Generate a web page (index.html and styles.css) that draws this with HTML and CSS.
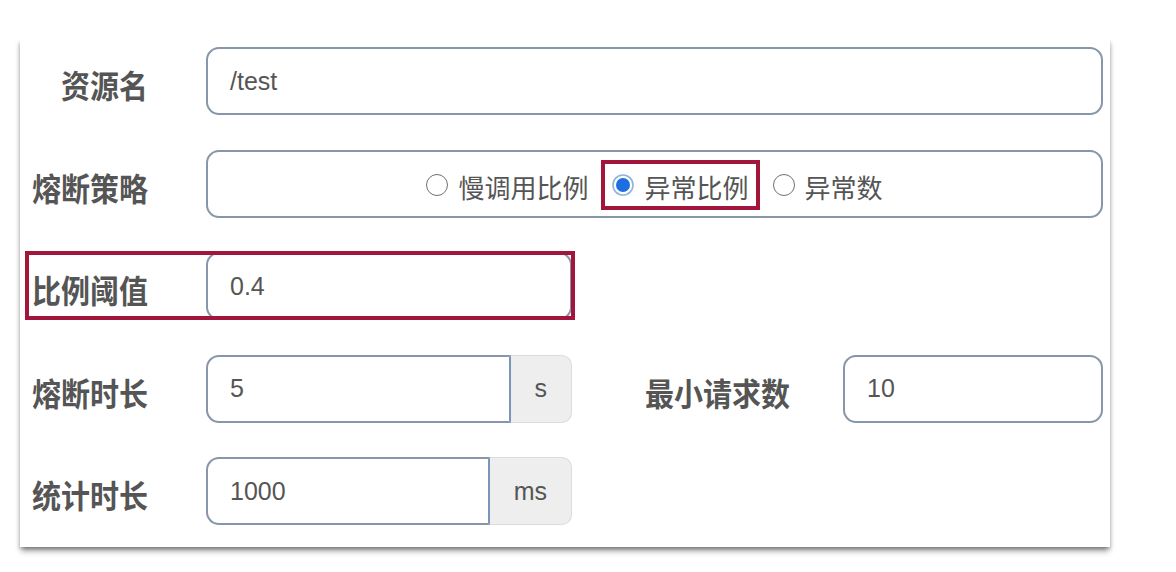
FILE: index.html
```html
<!DOCTYPE html>
<html lang="zh-CN">
<head>
<meta charset="utf-8">
<title>熔断规则</title>
<link rel="stylesheet" href="styles.css">
</head>
<body>
<div class="panel">
  <form class="form">
    <div class="row">
      <label class="lbl">资源名</label>
      <div class="field wide"><span class="val">/test</span></div>
    </div>
    <div class="row">
      <label class="lbl">熔断策略</label>
      <div class="field wide radios">
        <span class="opt"><span class="radio"></span><span class="opt-t">慢调用比例</span></span>
        <span class="opt sel"><svg class="radio-on" viewBox="0 0 22 22" width="22" height="22"><circle cx="11" cy="11" r="10" fill="#fff" stroke="#8fb2de" stroke-width="1.6"/><circle cx="11" cy="11" r="7" fill="#1c6fdf"/></svg><span class="opt-t">异常比例</span></span>
        <span class="opt"><span class="radio"></span><span class="opt-t">异常数</span></span>
      </div>
    </div>
    <div class="row">
      <div class="hl">
        <label class="lbl">比例阈值</label>
        <div class="field short"><span class="val">0.4</span></div>
      </div>
    </div>
    <div class="row">
      <label class="lbl">熔断时长</label>
      <div class="group">
        <div class="field gin"><span class="val">5</span></div>
        <div class="addon">s</div>
      </div>
      <label class="lbl lbl2">最小请求数</label>
      <div class="field wide"><span class="val">10</span></div>
    </div>
    <div class="row">
      <label class="lbl">统计时长</label>
      <div class="group">
        <div class="field gin"><span class="val">1000</span></div>
        <div class="addon">ms</div>
      </div>
    </div>
  </form>
</div>
</body>
</html>
```

FILE: styles.css
```css
html, body {
  margin: 0;
  padding: 0;
  background: #ffffff;
}

body {
  width: 1176px;
  height: 572px;
  overflow: hidden;
  font-family: "Liberation Sans", "Noto Sans CJK SC", sans-serif;
}

.panel {
  margin: 38px 0 0 20px;
  width: 1090px;
  height: 509px;
  box-sizing: border-box;
  background: #ffffff;
  box-shadow: 0 5px 6px -1px rgba(0, 0, 0, 0.38),
              -2px 3px 3px -1px rgba(0, 0, 0, 0.13),
              2px 3px 3px -1px rgba(0, 0, 0, 0.13);
  padding: 9px 7px 0 0;
}

.form {
  display: flex;
  flex-direction: column;
  gap: 34.5px;
  margin: 0;
}

.row {
  display: flex;
  align-items: center;
  height: 68px;
}

.lbl {
  width: 128px;
  margin-right: 58px;
  flex: none;
  text-align: right;
  font-family: "Noto Sans CJK SC", sans-serif;
  font-weight: 700;
  font-size: 29px;
  line-height: 32px;
  color: #555555;
  white-space: nowrap;
  transform: translateY(3px) scaleY(1.1);
}

.lbl2 {
  width: 145px;
  margin-left: 73px;
  margin-right: 53px;
}

.field {
  height: 68px;
  box-sizing: border-box;
  border: 2px solid #8796a9;
  border-radius: 13px;
  padding-left: 22px;
  display: flex;
  align-items: center;
  font-family: "Liberation Sans", sans-serif;
  font-size: 25px;
  color: #555555;
  background: #ffffff;
}

.wide {
  flex: 1;
}

.short {
  width: 366px;
}

.radios {
  justify-content: center;
  padding-left: 0;
  gap: 24px;
}

.opt {
  position: relative;
  display: inline-flex;
  align-items: center;
  gap: 10px;
  height: 32px;
  margin-top: 6px;
}

.opt-t {
  font-family: "Noto Sans CJK SC", sans-serif;
  font-size: 26px;
  line-height: 32px;
  color: #555555;
}

.radio {
  width: 22px;
  height: 22px;
  box-sizing: border-box;
  border: 1.6px solid #707070;
  border-radius: 50%;
  background: #ffffff;
  margin-top: -3px;
}

.radio-on {
  display: block;
  margin-top: -3px;
}

.sel::after {
  content: "";
  position: absolute;
  top: -11px;
  bottom: -7px;
  left: -11px;
  right: -11px;
  border: 4px solid #a3163b;
  pointer-events: none;
}

.hl {
  position: relative;
  display: flex;
  align-items: center;
}

.hl::after {
  content: "";
  position: absolute;
  top: -1px;
  height: 69px;
  left: 5px;
  right: -3px;
  box-sizing: border-box;
  border: 4px solid #a3163b;
  pointer-events: none;
}

.group {
  width: 366px;
  height: 68px;
  display: flex;
  flex: none;
}

.gin {
  flex: 1;
  border-radius: 13px 0 0 13px;
  border-right-color: #7a95b6;
}

.addon {
  box-sizing: border-box;
  padding: 0 24px;
  display: flex;
  align-items: center;
  justify-content: center;
  background: #eeeeee;
  border: 1px solid #dcdcdc;
  border-left: none;
  border-radius: 0 10px 10px 0;
  font-family: "Liberation Sans", sans-serif;
  font-size: 25px;
  color: #555555;
}
```
